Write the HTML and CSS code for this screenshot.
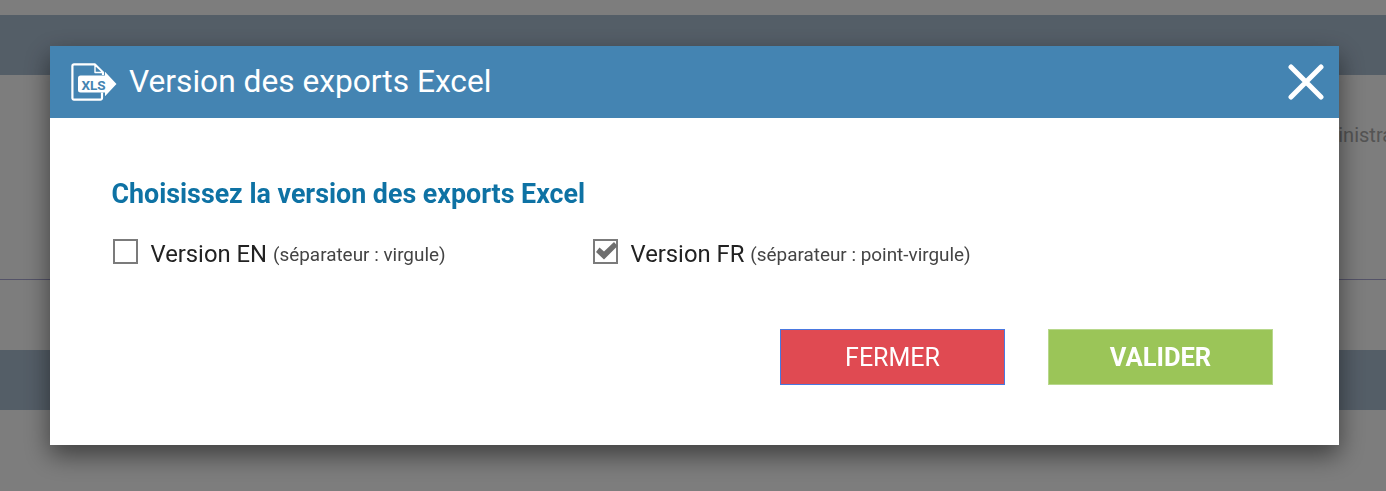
FILE: index.html
```html
<!DOCTYPE html>
<html lang="fr">
<head>
<meta charset="utf-8">
<title>Version des exports Excel</title>
<link rel="stylesheet" href="styles.css">
</head>
<body>
<div class="page">
  <div class="band"></div>
  <div class="admin-row"><span class="admin-text">Administration</span></div>
  <div class="rule"></div>
  <div class="band band-second"></div>
</div>
<div class="overlay"></div>
<section class="modal">
  <header class="modal-head">
    <div class="modal-title-group">
      <svg class="xls-icon" width="46" height="38" viewBox="0 0 46 38" aria-hidden="true">
        <path d="M31 29.500V35a1.600 1.600 0 0 1-1.600 1.600H3A1.600 1.600 0 0 1 1.400 35V3A1.600 1.600 0 0 1 3 1.400H24L32 9.500V12" fill="none" stroke="#fff" stroke-width="2.200" stroke-linejoin="round"/>
        <path d="M24 2v7.500h8z" fill="#4484b2" stroke="#fff" stroke-width="1.400" stroke-linejoin="round"/>
        <path d="M9.500 12.500H34V8.800L45.500 21 34 33.200V29.500H9.500a2.500 2.500 0 0 1-2.500-2.500V15a2.500 2.500 0 0 1 2.500-2.500z" fill="#fff"/>
        <text class="xls-label" x="10.500" y="26.500">XLS</text>
      </svg>
      <h1 class="modal-title">Version des exports Excel</h1>
    </div>
    <svg class="close-icon" width="36" height="36" viewBox="0 0 36 36" aria-hidden="true">
      <path d="M3 3L33 33M33 3L3 33" stroke="#fff" stroke-width="5" stroke-linecap="round"/>
    </svg>
  </header>
  <div class="modal-body">
    <h2 class="prompt">Choisissez la version des exports Excel</h2>
    <div class="options">
      <div class="option">
        <span class="box"></span>
        <span class="opt-label">Version EN</span>
        <span class="opt-note">(séparateur : virgule)</span>
      </div>
      <div class="option">
        <span class="box">
          <svg class="tick" width="23" height="21" viewBox="0 0 23 21" aria-hidden="true">
            <path d="M1 11L4.500 6.500L9 10.500L19 1L22.500 5L9 18.500z" fill="#6e6e6e"/>
          </svg>
        </span>
        <span class="opt-label">Version FR</span>
        <span class="opt-note">(séparateur : point-virgule)</span>
      </div>
    </div>
    <div class="actions">
      <button class="btn btn-close" type="button">FERMER</button>
      <button class="btn btn-ok" type="button">VALIDER</button>
    </div>
  </div>
</section>
</body>
</html>
```
FILE: styles.css
```css
* { box-sizing: border-box; }
html, body { margin: 0; height: 100%; overflow: hidden; }
body { background: #fafafa; font-family: Roboto, "Liberation Sans", sans-serif; }

.page { padding-top: 15px; }
.band { height: 60px; background: #a9bccf; }
.admin-row { height: 204px; padding-top: 48px; display: flex; justify-content: flex-end; overflow: hidden; }
.admin-text { font-size: 20px; color: #a8a8a8; margin-right: -41px; line-height: 24px; white-space: nowrap; flex: none; }
.rule { height: 1px; background: #a8a6d0; }
.band-second { margin-top: 70px; }

.overlay { position: fixed; inset: 0; background: rgba(0, 0, 0, 0.5); }

.modal {
  position: fixed;
  left: 49.500px;
  top: 46px;
  width: 1289.500px;
  height: 399px;
  background: #fff;
  box-shadow: 0 10px 24px rgba(0, 0, 0, 0.5);
  display: flex;
  flex-direction: column;
}
.modal-head {
  height: 72px;
  flex: none;
  background: #4484b2;
  display: flex;
  align-items: center;
  justify-content: space-between;
  padding: 0 15px 0 21.500px;
}
.modal-title-group { display: flex; align-items: center; gap: 12px; }
.xls-icon { display: block; }
.xls-label { font: 700 13.500px Roboto, sans-serif; fill: #4484b2; }
.modal-title { margin: 0; font-size: 31.700px; font-weight: 400; color: #fff; line-height: 36px; }
.close-icon { display: block; }

.modal-body { flex: 1; padding: 61px 66px 0 62px; }
.prompt { margin: 0; font-size: 26.800px; font-weight: 700; line-height: 30px; color: #0e72a4; }
.options { display: flex; margin-top: 27px; }
.option { display: flex; align-items: center; width: 480px; height: 31px; }
.box {
  width: 25px;
  height: 25px;
  border: 2px solid #7b7b7b;
  margin-left: 1.500px;
  margin-right: 12.500px;
  background: #fff;
  flex: none;
  position: relative;
}
.tick { position: absolute; left: 0; top: 0; }
.opt-label { font-size: 23.800px; color: #222; line-height: 30px; margin-right: 6px; padding-top: 5px; }
.opt-note { font-size: 18.900px; color: #444; line-height: 30px; padding-top: 7px; }

.actions { display: flex; justify-content: flex-end; gap: 43px; margin-top: 62px; }
.btn {
  width: 225px;
  height: 56px;
  font: 400 25px Roboto, sans-serif;
  color: #fff;
  border: 1px solid transparent;
  padding: 0;
  border-radius: 0;
}
.btn-close { background: #e04a52; border-color: #4a78e0; }
.btn-ok { background: #9bc558; border-color: #b8d88c; font-weight: 700; font-size: 25.500px; }
```
